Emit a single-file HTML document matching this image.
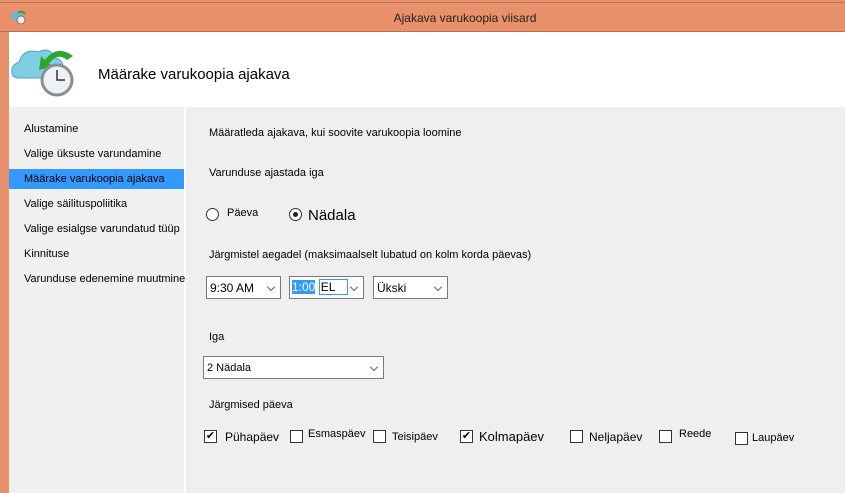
<!DOCTYPE html>
<html><head><meta charset="utf-8"><style>
*{margin:0;padding:0;box-sizing:border-box}
body{width:845px;height:493px;overflow:hidden;background:#e9916a;font-family:"Liberation Sans",sans-serif;font-size:11px;color:#000;position:relative}
.abs{position:absolute}
.t{position:absolute;white-space:nowrap}
.sel{position:absolute;background:#fff;border:1px solid #7a7a7a;height:23px}
.sel .v{position:absolute;left:3px;top:4px;font-size:12px}
.sel .a{position:absolute;right:6px;top:7px;width:6px;height:6px;border-right:1.5px solid #666;border-bottom:1.5px solid #666;transform:rotate(45deg)}
.cb{position:absolute;width:13px;height:13px;border:1px solid #333;background:#fff;font-size:11px;line-height:11px;text-align:center}
</style></head><body>
<div class="abs" style="left:0;top:2px;width:845px;height:1px;background:#b86f50"></div>
<div class="abs" style="left:0;top:31px;width:845px;height:1px;background:#c07050"></div>
<svg class="abs" style="left:10px;top:8px" width="18" height="18" viewBox="0 0 18 18"><ellipse cx="7" cy="8" rx="6" ry="4" fill="#5bbfd8"/><path d="M8 5 Q12 2 15 6" stroke="#3a3" stroke-width="2" fill="none"/><circle cx="11" cy="12" r="4" fill="#eee" stroke="#777"/></svg>
<div class="t" style="left:0;width:845px;top:11px;text-align:center;font-size:12px;color:#222;padding-left:85px">Ajakava varukoopia viisard</div>
<div class="abs" style="left:9px;top:32px;width:836px;height:75px;background:#fff"></div>
<svg class="abs" style="left:9px;top:40px" width="70" height="60" viewBox="0 0 70 60">
<path d="M4 36 Q0 26 10 22 Q14 8 30 12 Q40 6 46 18 Q56 20 54 32 L50 38 L8 38 Z" fill="#7fcfe4" stroke="#4aa6c4"/>
<path d="M36 20 Q48 4 64 16 L58 20 Q48 12 40 24 L46 26 L30 30 L32 16 Z" fill="#2ea62e"/>
<circle cx="48" cy="40" r="15" fill="#eef2f4" stroke="#8a8f94" stroke-width="3"/>
<path d="M48 30 V40 H56" stroke="#333" stroke-width="1.5" fill="none"/></svg>
<div class="t" style="left:98px;top:66px;font-size:15px">Määrake varukoopia ajakava</div>
<div class="abs" style="left:9px;top:107px;width:175px;height:386px;background:#f0f0f0"></div>
<div class="abs" style="left:184px;top:107px;width:2px;height:386px;background:#fff"></div>
<div class="abs" style="left:186px;top:107px;width:659px;height:386px;background:#efefef"></div>
<div class="abs" style="left:9px;top:169px;width:175px;height:20px;background:#3399ff"></div>
<div class="t" style="left:24px;top:123px">Alustamine</div>
<div class="t" style="left:24px;top:148px">Valige üksuste varundamine</div>
<div class="t" style="left:24px;top:173px">Määrake varukoopia ajakava</div>
<div class="t" style="left:24px;top:198px">Valige säilituspoliitika</div>
<div class="t" style="left:24px;top:223px">Valige esialgse varundatud tüüp</div>
<div class="t" style="left:24px;top:248px">Kinnituse</div>
<div class="t" style="left:24px;top:273px">Varunduse edenemine muutmine</div>

<div class="t" style="left:209px;top:127px">Määratleda ajakava, kui soovite varukoopia loomine</div>
<div class="t" style="left:209px;top:167px">Varunduse ajastada iga</div>
<div class="abs" style="left:206px;top:208px;width:13px;height:13px;border:1px solid #333;border-radius:50%;background:#fff"></div>
<div class="t" style="left:227px;top:207px">Päeva</div>
<div class="abs" style="left:289px;top:208px;width:13px;height:13px;border:1px solid #333;border-radius:50%;background:#fff"><div style="position:absolute;left:3px;top:3px;width:5px;height:5px;border-radius:50%;background:#222"></div></div>
<div class="t" style="left:308px;top:207px;font-size:15px">Nädala</div>
<div class="t" style="left:209px;top:249px">Järgmistel aegadel (maksimaalselt lubatud on kolm korda päevas)</div>
<div class="sel" style="left:206px;top:276px;width:75px"><span class="v">9:30 AM</span><span class="a"></span></div>
<div class="sel" style="left:289px;top:276px;width:75px"><span class="v" style="left:2px;top:3px"><span style="background:#3399ff;color:#fff">1:00</span> <span style="border:1px solid #3399ff;padding:0 12px 0 1px">EL</span></span><span class="a"></span></div>
<div class="sel" style="left:373px;top:276px;width:75px"><span class="v">Ükski</span><span class="a"></span></div>
<div class="t" style="left:209px;top:331px">Iga</div>
<div class="sel" style="left:203px;top:356px;width:181px"><span class="v" style="font-size:11px;top:5px">2 Nädala</span><span class="a"></span></div>
<div class="t" style="left:209px;top:399px">Järgmised päeva</div>
<div class="cb" style="left:204px;top:430px">✔</div><div class="t" style="left:225px;top:430px;font-size:12px">Pühapäev</div>
<div class="cb" style="left:290px;top:430px"></div><div class="t" style="left:308px;top:428px">Esmaspäev</div>
<div class="cb" style="left:373px;top:430px"></div><div class="t" style="left:392px;top:431px">Teisipäev</div>
<div class="cb" style="left:460px;top:430px">✔</div><div class="t" style="left:479px;top:429px;font-size:13px">Kolmapäev</div>
<div class="cb" style="left:570px;top:430px"></div><div class="t" style="left:589px;top:430px;font-size:12px">Neljapäev</div>
<div class="cb" style="left:659px;top:430px"></div><div class="t" style="left:679px;top:428px">Reede</div>
<div class="cb" style="left:735px;top:432px"></div><div class="t" style="left:752px;top:432px">Laupäev</div>
</body></html>
